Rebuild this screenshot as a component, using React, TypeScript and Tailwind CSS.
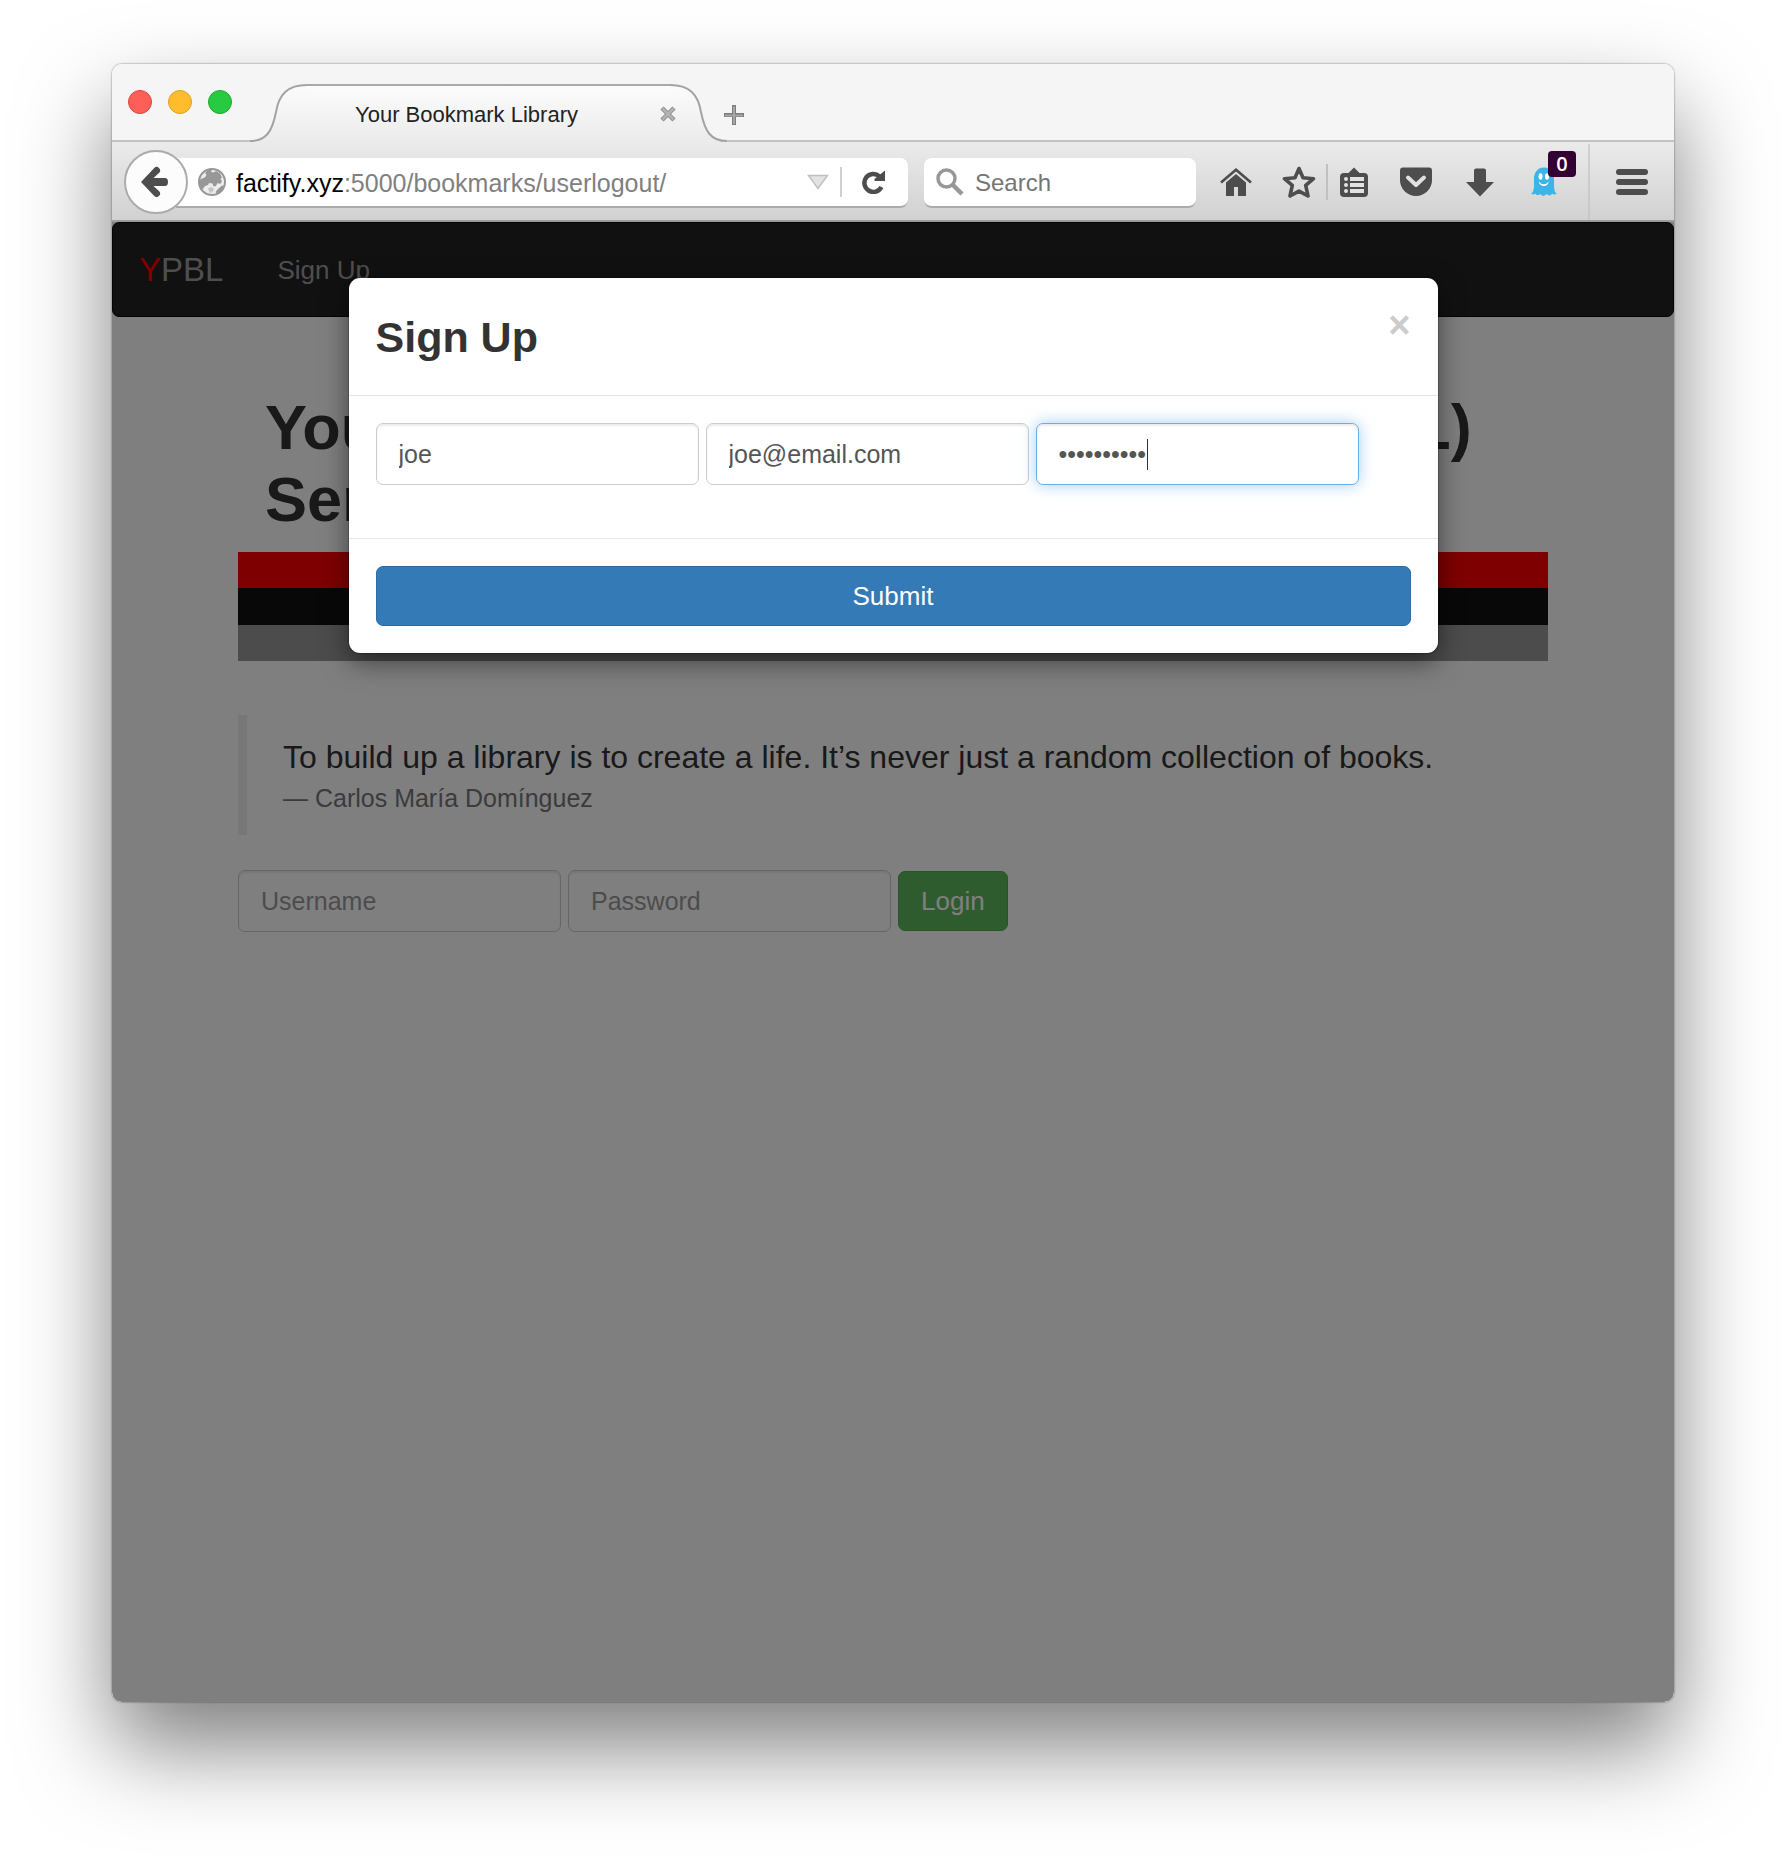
import React from "react";

function GlobeIcon() {
  return (
    <svg width="28" height="28" viewBox="0 0 28 28" aria-hidden="true" className="shrink-0">
      <circle cx="14" cy="14" r="13" fill="#ececec" stroke="#979797" strokeWidth="2" />
      <path
        d="M1.500 12 4 10.500l3-1 1.500-3L7 5.500 9.500 2.500 14 1.500l-1 2.500 2.500.5L18 3l4 2.500 2 4-1.500 1.500 1.500 2.500-2 2.500-2.500-1-1.500 3-2.500.500-1-3-3.500-.5-1 2-3 1-2 3-3-.5z"
        fill="#979797"
      />
      <path d="M10 20.500l3.500-1.500 2.500 2-1.500 3L12 25z" fill="#c4c4c4" />
      <path d="M20 21l4-3.500 2 .5-3 5.500-4 2.500-1.500-2z" fill="#979797" />
    </svg>
  );
}

function BackIcon() {
  return (
    <svg width="28" height="32" viewBox="0 0 28 32" aria-hidden="true">
      <path
        d="M1 16 14 2.200q2.600-2.600 5-.2t.2 4.800L13.500 12H25q3 0 3 4t-3 4H13.500l5.700 5.200q2.200 2.400-.2 4.800t-5-.2z"
        fill="#4d4d4d"
      />
    </svg>
  );
}

function ReloadIcon() {
  return (
    <svg width="24" height="24" viewBox="0 0 24 24" aria-hidden="true">
      <path d="M17.500 6.300A9 9 0 1 0 19.400 17" fill="none" stroke="#4d4d4d" strokeWidth="4.500" />
      <path d="M23 0.500V11H12.500v-2z" fill="#4d4d4d" />
    </svg>
  );
}

function SearchIcon() {
  return (
    <svg width="28" height="28" viewBox="0 0 28 28" aria-hidden="true" className="shrink-0">
      <circle cx="10.500" cy="10.500" r="8.500" fill="none" stroke="#979797" strokeWidth="3.500" />
      <path d="M16.500 16.500 26 26" stroke="#979797" strokeWidth="4.500" />
    </svg>
  );
}

function HomeIcon() {
  return (
    <svg width="32" height="29" viewBox="0 0 32 29" aria-hidden="true">
      <path d="M1 14.500 16 1.700 31 14.500" fill="none" stroke="#4d4d4d" strokeWidth="2.600" />
      <path d="M6 14.500 16 6l10 8.500V28h-8v-9h-4v9H6z" fill="#4d4d4d" />
    </svg>
  );
}

function StarIcon() {
  return (
    <svg width="34" height="34" viewBox="0 0 34 34" aria-hidden="true">
      <path
        d="M17 3.500l4 9.200 10.500 1-7.800 6.600 2.300 10.700-9-4.900-9 4.900 2.300-10.700-7.800-6.600 10.500-1z"
        fill="none"
        stroke="#4d4d4d"
        strokeWidth="3.600"
        strokeLinejoin="round"
      />
    </svg>
  );
}

function ListIcon() {
  return (
    <svg width="28" height="31" viewBox="0 0 28 31" aria-hidden="true">
      <path d="M8 6.500 14 0.500l6 6z" fill="#4d4d4d" />
      <rect y="6" width="28" height="24" rx="4" fill="#4d4d4d" />
      <g fill="#e2e2e2">
        <circle cx="6" cy="12" r="2" />
        <circle cx="6" cy="18" r="2" />
        <circle cx="6" cy="24" r="2" />
        <rect x="10" y="10" width="14" height="4" />
        <rect x="10" y="16" width="14" height="4" />
        <rect x="10" y="22" width="14" height="4" />
      </g>
    </svg>
  );
}

function PocketIcon() {
  return (
    <svg width="32" height="30" viewBox="0 0 32 30" aria-hidden="true">
      <path d="M3 0.500h26q3 0 3 3V13a16 16 0 0 1-32 0V3.500q0-3 3-3z" fill="#4d4d4d" />
      <path d="M8 10.500l8 7.500 8-7.500" fill="none" stroke="#e0e0e0" strokeWidth="4" strokeLinecap="round" strokeLinejoin="round" />
    </svg>
  );
}

function DownIcon() {
  return (
    <svg width="28" height="29" viewBox="0 0 28 29" aria-hidden="true">
      <path d="M10 0.500h8q2 0 2 2V14h8L14 28.500 0 14h8V2.500q0-2 2-2z" fill="#4d4d4d" />
    </svg>
  );
}

function GhostIcon() {
  return (
    <svg width="26" height="30" viewBox="0 0 26 30" aria-hidden="true">
      <path
        d="M3 12C3 5 7 .5 13 .5S23 5 23 12v8q0 4 2.500 7-2.500 1-4.500-.5-1 3-3.500 1.500-2-1.500-3.500 0-1.500 2-3.500 0-1.500-1.500-3 0-2.500.5-3-1.500-2 1.500-4.200.5Q3 24 3 20z"
        fill="#3bb4e8"
      />
      <ellipse cx="9.500" cy="9.500" rx="2" ry="3.300" fill="#fff" />
      <ellipse cx="16" cy="9.500" rx="2" ry="3.300" fill="#fff" />
      <path d="M7.500 14.500q5.300 5.500 10.500 0-1.500 4.500-5.200 4.500t-5.300-4.500z" fill="#fff" />
    </svg>
  );
}

function MenuIcon() {
  return (
    <svg width="32" height="26" viewBox="0 0 32 26" aria-hidden="true">
      <g fill="#4d4d4d">
        <rect width="32" height="6" rx="3" />
        <rect y="10" width="32" height="6" rx="3" />
        <rect y="20" width="32" height="6" rx="3" />
      </g>
    </svg>
  );
}

function TabCap({ flip }: { flip?: boolean }) {
  return (
    <svg width="57" height="58" viewBox="0 0 57 58" aria-hidden="true" className={flip ? "-scale-x-100 shrink-0" : "shrink-0"}>
      <defs>
        <linearGradient id={flip ? "capR" : "capL"} x1="0" y1="0" x2="0" y2="1">
          <stop offset="0" stopColor="#fcfcfc" />
          <stop offset="1" stopColor="#ebebeb" />
        </linearGradient>
      </defs>
      <path d="M0 58V57C16 57 22 48 26 28 29 10 38 1 57 1V58z" fill={flip ? "url(#capR)" : "url(#capL)"} />
      <path d="M0 57C16 57 22 48 26 28 29 10 38 1 57 1" fill="none" stroke="#a3a3a3" strokeWidth="2" />
    </svg>
  );
}

function TitleBar() {
  return (
    <div className="relative flex h-[78px] items-end bg-[#f5f5f5]">
      <div className="absolute inset-x-0 bottom-0 h-[2px] bg-[#c3c3c3]" />
      <div className="flex gap-4 self-start pt-[26px] pl-4">
        <button aria-label="Close window" className="size-6 rounded-full border border-[#e0443e] bg-[#ff5f57]" />
        <button aria-label="Minimize window" className="size-6 rounded-full border border-[#dea123] bg-[#ffbd2e]" />
        <button aria-label="Zoom window" className="size-6 rounded-full border border-[#1aab29] bg-[#28ca42]" />
      </div>
      <div className="relative ml-[18px] flex h-[58px] min-w-0">
        <TabCap />
        <div className="flex w-[363px] items-center justify-between border-t-2 border-[#a9a9a9] bg-linear-to-b from-[#fcfcfc] to-[#ebebeb] pl-12">
          <span className="pt-0.5 text-[22px] leading-7 whitespace-nowrap text-[#222]">Your Bookmark Library</span>
          <button aria-label="Close tab" className="relative z-10 -mr-1.5 shrink-0">
            <svg width="16" height="16" viewBox="0 0 16 16" aria-hidden="true">
              <path d="M2 2l12 12M14 2L2 14" stroke="#8c8c8c" strokeWidth="4.500" />
              <path d="M2.500 2.500l11 11M13.500 2.500l-11 11" stroke="#b3b3b3" strokeWidth="2.500" />
            </svg>
          </button>
        </div>
        <TabCap flip />
      </div>
      <button aria-label="New tab" className="-ml-1 mb-4">
        <svg width="22" height="22" viewBox="0 0 22 22" aria-hidden="true">
          <path d="M11 1v20M1 11h20" stroke="#7d7d7d" strokeWidth="4" />
          <path d="M11 2.500v17.500M2 11.500h18" stroke="#a6a6a6" strokeWidth="2" />
        </svg>
      </button>
    </div>
  );
}

function Toolbar() {
  return (
    <div className="flex h-20 items-center border-b-2 border-[#9d9d9d] bg-linear-to-b from-[#ebebeb] to-[#d1d1d1] pt-0.5 pl-3">
      <button
        aria-label="Back"
        className="relative z-10 flex size-16 shrink-0 items-center justify-center rounded-full border-2 border-[#ababab] bg-[#fcfcfc] pr-1"
      >
        <BackIcon />
      </button>
      <div className="mt-0.5 -ml-3 flex h-[50px] min-w-0 flex-1 items-center rounded-r-lg border-b-2 border-[#aaa] bg-white pl-[22px]">
        <GlobeIcon />
        <div className="relative ml-2.5 min-w-0 flex-1 pt-0.5 text-[25px] leading-8">
          <div aria-hidden="true" className="whitespace-nowrap">
            factify.xyz<span className="text-[#808080]">:5000/bookmarks/userlogout/</span>
          </div>
          <input
            aria-label="Address"
            defaultValue="factify.xyz:5000/bookmarks/userlogout/"
            className="absolute inset-0 w-full text-transparent outline-none"
          />
        </div>
        <button aria-label="Show history" className="mr-[11px]">
          <svg width="22" height="16" viewBox="0 0 22 16" aria-hidden="true">
            <path d="M1.500 1.500h19L11 14.500z" fill="#e2e2e2" stroke="#c0c0c0" strokeWidth="1.500" />
          </svg>
        </button>
        <span className="h-[30px] w-[2px] bg-[#d0d0d0]" />
        <button aria-label="Reload" className="mr-[22px] ml-5">
          <ReloadIcon />
        </button>
      </div>
      <label className="mt-0.5 ml-4 flex h-[50px] w-[272px] items-center rounded-lg border-b-2 border-[#aaa] bg-white pl-3">
        <SearchIcon />
        <input
          type="search"
          aria-label="Search"
          placeholder="Search"
          className="ml-[11px] w-full min-w-0 pt-0.5 text-[24px] leading-8 outline-none placeholder:text-[#757575]"
        />
      </label>
      <button aria-label="Home" className="ml-6">
        <HomeIcon />
      </button>
      <button aria-label="Bookmark this page" className="ml-[30px]">
        <StarIcon />
      </button>
      <span className="ml-[10px] h-9 w-[2px] bg-[#c0c0c0]" />
      <button aria-label="Bookmarks list" className="ml-3">
        <ListIcon />
      </button>
      <button aria-label="Pocket" className="ml-8">
        <PocketIcon />
      </button>
      <button aria-label="Downloads" className="ml-[34px]">
        <DownIcon />
      </button>
      <button aria-label="Ghostery" className="relative ml-[37px]">
        <GhostIcon />
        <span className="absolute -top-4 left-[17px] flex h-[26px] w-7 items-center justify-center rounded bg-[#330033] font-['Open_Sans','DejaVu_Sans',sans-serif] text-[20px] leading-[26px] font-semibold text-white">
          0
        </span>
      </button>
      <span className="ml-[31px] w-[2px] self-stretch bg-[#c0c0c0]/60" />
      <button aria-label="Open menu" className="mr-[26px] ml-[26px]">
        <MenuIcon />
      </button>
    </div>
  );
}

const field =
  "h-[62px] w-[323px] rounded-[7px] border border-[#ccc] bg-white px-[22px] text-[25px] text-[#555] shadow-[inset_0_2px_2px_rgba(0,0,0,0.075)] outline-none placeholder:text-[#999]";

function LibraryPage() {
  return (
    <>
      <nav className="flex h-[95px] items-center rounded-[7px] border border-[#080808] bg-[#222] px-[26px] text-[#9d9d9d]">
        <a href="#home" className="text-[33px] leading-9">
          <span className="text-[#f00]">Y</span>PBL
        </a>
        <a href="#signup" className="ml-[54px] text-[26px] leading-9">
          Sign Up
        </a>
      </nav>
      <main className="mx-[126px]">
        <h1 className="mt-[74px] px-[27px] text-[63px] leading-[72px] font-bold text-[#333]">
          Your Personal Bookmark Library (YPBL) Service
        </h1>
        <div className="mt-[17px]">
          <div className="h-9 bg-[#f00]" />
          <div className="h-[37px] bg-[#101010]" />
          <div className="h-9 bg-[#999]" />
        </div>
        <blockquote className="mt-[54px] border-l-[9px] border-[#eee] py-[19px] pl-9">
          <p className="text-[32px] leading-[46px] text-[#333]">
            To build up a library is to create a life. It’s never just a random collection of books.
          </p>
          <footer className="text-[25px] leading-9 text-[#777]">— Carlos María Domínguez</footer>
        </blockquote>
        <form className="mt-[35px] flex flex-wrap items-center gap-[7px]">
          <input aria-label="Username" placeholder="Username" className={field} />
          <input type="password" aria-label="Password" placeholder="Password" className={field} />
          <button type="button" className="h-[60px] rounded-[7px] border border-[#4cae4c] bg-[#5cb85c] px-[22px] text-[26px] text-white">
            Login
          </button>
        </form>
      </main>
    </>
  );
}

function SignUpDialog() {
  return (
    <div className="absolute inset-0 rounded-b-[9px] bg-black/50 px-9 pt-14">
      <div
        role="dialog"
        aria-labelledby="signup-title"
        className="mx-auto max-w-[1089px] rounded-[11px] bg-white shadow-[0_9px_27px_rgba(0,0,0,0.5),0_0_0_1px_rgba(0,0,0,0.2)]"
      >
        <div className="flex items-start justify-between border-b border-[#e5e5e5] px-[27px] pt-7 pb-[26px]">
          <h2 id="signup-title" className="text-[43px] leading-[63px] font-bold text-[#333]">
            Sign Up
          </h2>
          <button aria-label="Close" className="text-[38px] leading-[38px] font-bold text-[#ccc]">
            ×
          </button>
        </div>
        <form>
          <div className="flex flex-wrap gap-[7px] px-[27px] pt-[27px] pb-[53px]">
            <input aria-label="Username" defaultValue="joe" className={field} />
            <input type="email" aria-label="Email" defaultValue="joe@email.com" className={field} />
            <div className="relative">
              <input
                type="password"
                aria-label="Password"
                defaultValue="bookmarks1"
                className="h-[62px] w-[323px] rounded-[7px] border border-[#66afe9] bg-white px-[22px] text-[25px] text-[#555] shadow-[inset_0_2px_2px_rgba(0,0,0,0.075),0_0_15px_rgba(102,175,233,0.6)] outline-none"
              />
              <span className="absolute top-4 left-[111px] h-[31px] w-px bg-[#333]" />
            </div>
          </div>
          <div className="border-t border-[#e5e5e5] p-[27px]">
            <button type="button" className="h-[60px] w-full rounded-[7px] border border-[#2e6da4] bg-[#337ab7] text-[26px] text-white">
              Submit
            </button>
          </div>
        </form>
      </div>
    </div>
  );
}

export default function App() {
  return (
    <div className="overflow-hidden bg-white px-28 pt-16 pb-40 font-['Liberation_Sans',Arial,sans-serif] text-black">
      <div className="rounded-[10px] shadow-[0_45px_90px_rgba(0,0,0,0.5),0_0_2px_rgba(0,0,0,0.6)]">
        <div className="overflow-hidden rounded-[10px] bg-white">
          <TitleBar />
          <Toolbar />
          <div className="relative min-h-[1480px]">
            <LibraryPage />
            <SignUpDialog />
          </div>
        </div>
      </div>
    </div>
  );
}
